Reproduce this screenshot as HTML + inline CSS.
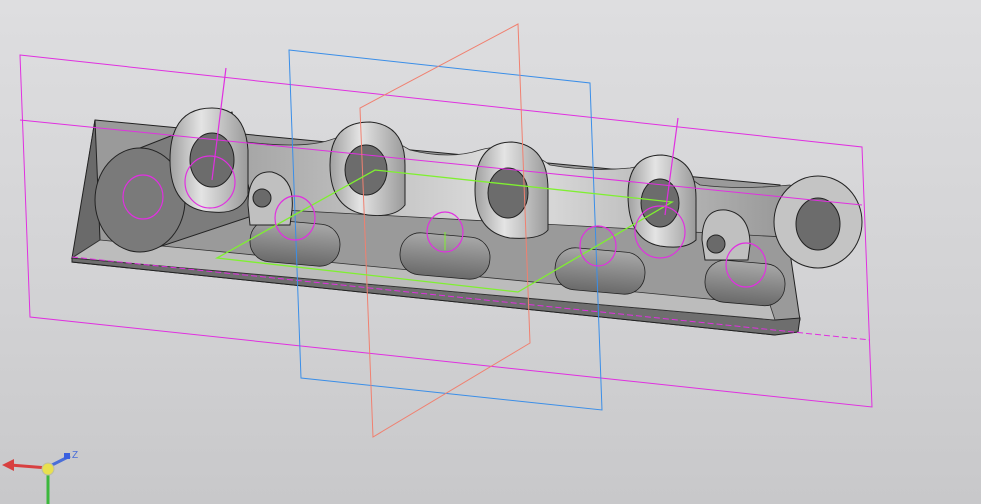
<!DOCTYPE html>
<html><head><style>
html,body{margin:0;padding:0;width:981px;height:504px;overflow:hidden}
body{background:linear-gradient(#dedee0,#d2d2d4 60%,#c8c8ca)}
svg{position:absolute;left:0;top:0}
</style></head><body>
<svg width="981" height="504" viewBox="0 0 981 504" xmlns="http://www.w3.org/2000/svg">
<defs>
<linearGradient id="cyl" x1="0" y1="0" x2="1" y2="0">
<stop offset="0" stop-color="#9a9a9a"/><stop offset=".5" stop-color="#e0e0e0"/><stop offset="1" stop-color="#8a8a8a"/></linearGradient>
<linearGradient id="boss" x1="0" y1="0" x2="1" y2="0">
<stop offset="0" stop-color="#a0a0a0"/><stop offset=".4" stop-color="#e4e4e4"/><stop offset="1" stop-color="#9a9a9a"/></linearGradient>
<linearGradient id="roll" x1="0" y1="0" x2="0" y2="1">
<stop offset="0" stop-color="#a8a8a8"/><stop offset="1" stop-color="#6a6a6a"/></linearGradient>
</defs>
<!-- tray -->
<polygon points="95,120 780,185 800,320 775,335 72,262" fill="#9a9a9a" stroke="#222" stroke-width="1"/>
<polygon points="95,120 72,258 100,240" fill="#6a6a6a" stroke="#222"/>
<polygon points="72,258 775,320 800,318 798,332 775,335 72,262" fill="#6e6e6e" stroke="#222"/>
<polygon points="100,240 770,305 775,320 72,258" fill="#bcbcbc" stroke="#333" stroke-width=".8"/>
<!-- back chain band -->
<path d="M230,140 Q300,150 330,140 Q370,125 410,150 Q450,160 480,150 Q515,140 550,165 Q590,172 630,168 Q665,160 700,185 Q740,190 790,185 L840,240 L190,205 Z" fill="url(#cyl)" stroke="#333" stroke-width=".8"/>
<!-- front rollers -->
<g fill="url(#roll)" stroke="#222" stroke-width=".8">
<rect x="250" y="222" width="90" height="42" rx="20" transform="rotate(5 295 243)"/>
<rect x="400" y="235" width="90" height="42" rx="20" transform="rotate(5 445 256)"/>
<rect x="555" y="250" width="90" height="42" rx="20" transform="rotate(5 600 271)"/>
<rect x="705" y="262" width="80" height="42" rx="20" transform="rotate(5 745 283)"/>
</g>
<!-- big left cylinder -->
<polygon points="140,148 232,112 255,215 150,250" fill="#7c7c7c" stroke="#222"/>
<ellipse cx="140" cy="200" rx="45" ry="52" fill="#7a7a7a" stroke="#222"/>
<!-- bosses (capsules) -->
<g stroke="#222" stroke-width="1">
<path d="M170,160 Q170,108 212,108 Q245,108 248,150 L248,195 Q240,215 212,212 Q170,210 170,160Z" fill="url(#boss)"/><ellipse cx="212" cy="160" rx="22" ry="27" fill="#6c6c6c"/>
<path d="M330,165 Q330,122 370,122 Q405,125 405,165 L405,205 Q395,218 368,215 Q330,210 330,165Z" fill="url(#boss)"/><ellipse cx="366" cy="170" rx="21" ry="25" fill="#6c6c6c"/>
<path d="M475,190 Q475,142 512,142 Q548,145 548,190 L548,230 Q540,240 510,238 Q475,232 475,190Z" fill="url(#boss)"/><ellipse cx="508" cy="193" rx="20" ry="25" fill="#6c6c6c"/>
<path d="M628,195 Q628,155 662,155 Q696,158 696,198 L696,240 Q685,250 660,246 Q628,240 628,195Z" fill="url(#boss)"/><ellipse cx="660" cy="203" rx="19" ry="24" fill="#6c6c6c"/>
<ellipse cx="818" cy="222" rx="44" ry="46" fill="#c4c4c4"/><ellipse cx="818" cy="224" rx="22" ry="26" fill="#6c6c6c"/>
<path d="M248,205 Q248,170 272,172 Q295,178 292,210 L290,225 L250,225Z" fill="#c0c0c0"/><circle cx="262" cy="198" r="9" fill="#6a6a6a"/>
<path d="M702,240 Q702,208 726,210 Q750,214 750,245 L748,260 L705,260Z" fill="#c0c0c0"/><circle cx="716" cy="244" r="9" fill="#6a6a6a"/>
</g>
<!-- planes -->
<g fill="none" stroke-width="1">
<polygon points="20,55 862,147 872,407 30,317" stroke="#e030e0"/>
<line x1="20" y1="120" x2="862" y2="205" stroke="#e030e0"/>
<line x1="72" y1="257" x2="870" y2="340" stroke="#e030e0" stroke-dasharray="6 3"/>
<polygon points="289,50 590,83 602,410 301,378" stroke="#3a8ee8"/>
<polygon points="518,24 360,108 373,437 530,343" stroke="#f08070"/>
<polygon points="217,258 375,170 672,202 518,292" stroke="#7ff030" stroke-width="1.3"/>
<g stroke="#e030e0" stroke-width="1.2">
<ellipse cx="143" cy="197" rx="20" ry="22"/>
<ellipse cx="210" cy="182" rx="25" ry="26"/>
<ellipse cx="295" cy="218" rx="20" ry="22"/>
<ellipse cx="445" cy="232" rx="18" ry="20"/>
<ellipse cx="598" cy="246" rx="18" ry="20"/>
<ellipse cx="660" cy="232" rx="25" ry="26"/>
<ellipse cx="746" cy="265" rx="20" ry="22"/>
<line x1="226" y1="68" x2="212" y2="180"/>
<line x1="678" y1="118" x2="665" y2="215"/>
</g>
<line x1="445" y1="232" x2="445" y2="250" stroke="#7ff030"/>
</g>
<!-- axis triad -->
<line x1="48" y1="470" x2="48" y2="504" stroke="#3cb83c" stroke-width="3"/>
<line x1="48" y1="468" x2="10" y2="465" stroke="#d84040" stroke-width="3"/>
<polygon points="2,465 14,459 14,471" fill="#d84040"/>
<line x1="50" y1="466" x2="70" y2="456" stroke="#4a6ed8" stroke-width="3"/>
<rect x="64" y="453" width="6" height="6" fill="#3a60e0"/>
<text x="72" y="458" font-family="Liberation Sans,sans-serif" font-size="10" fill="#4a6ed8">Z</text>
<circle cx="48" cy="469" r="6" fill="#e8e050" stroke="#bba" stroke-width="1"/>
</svg>
</body></html>
